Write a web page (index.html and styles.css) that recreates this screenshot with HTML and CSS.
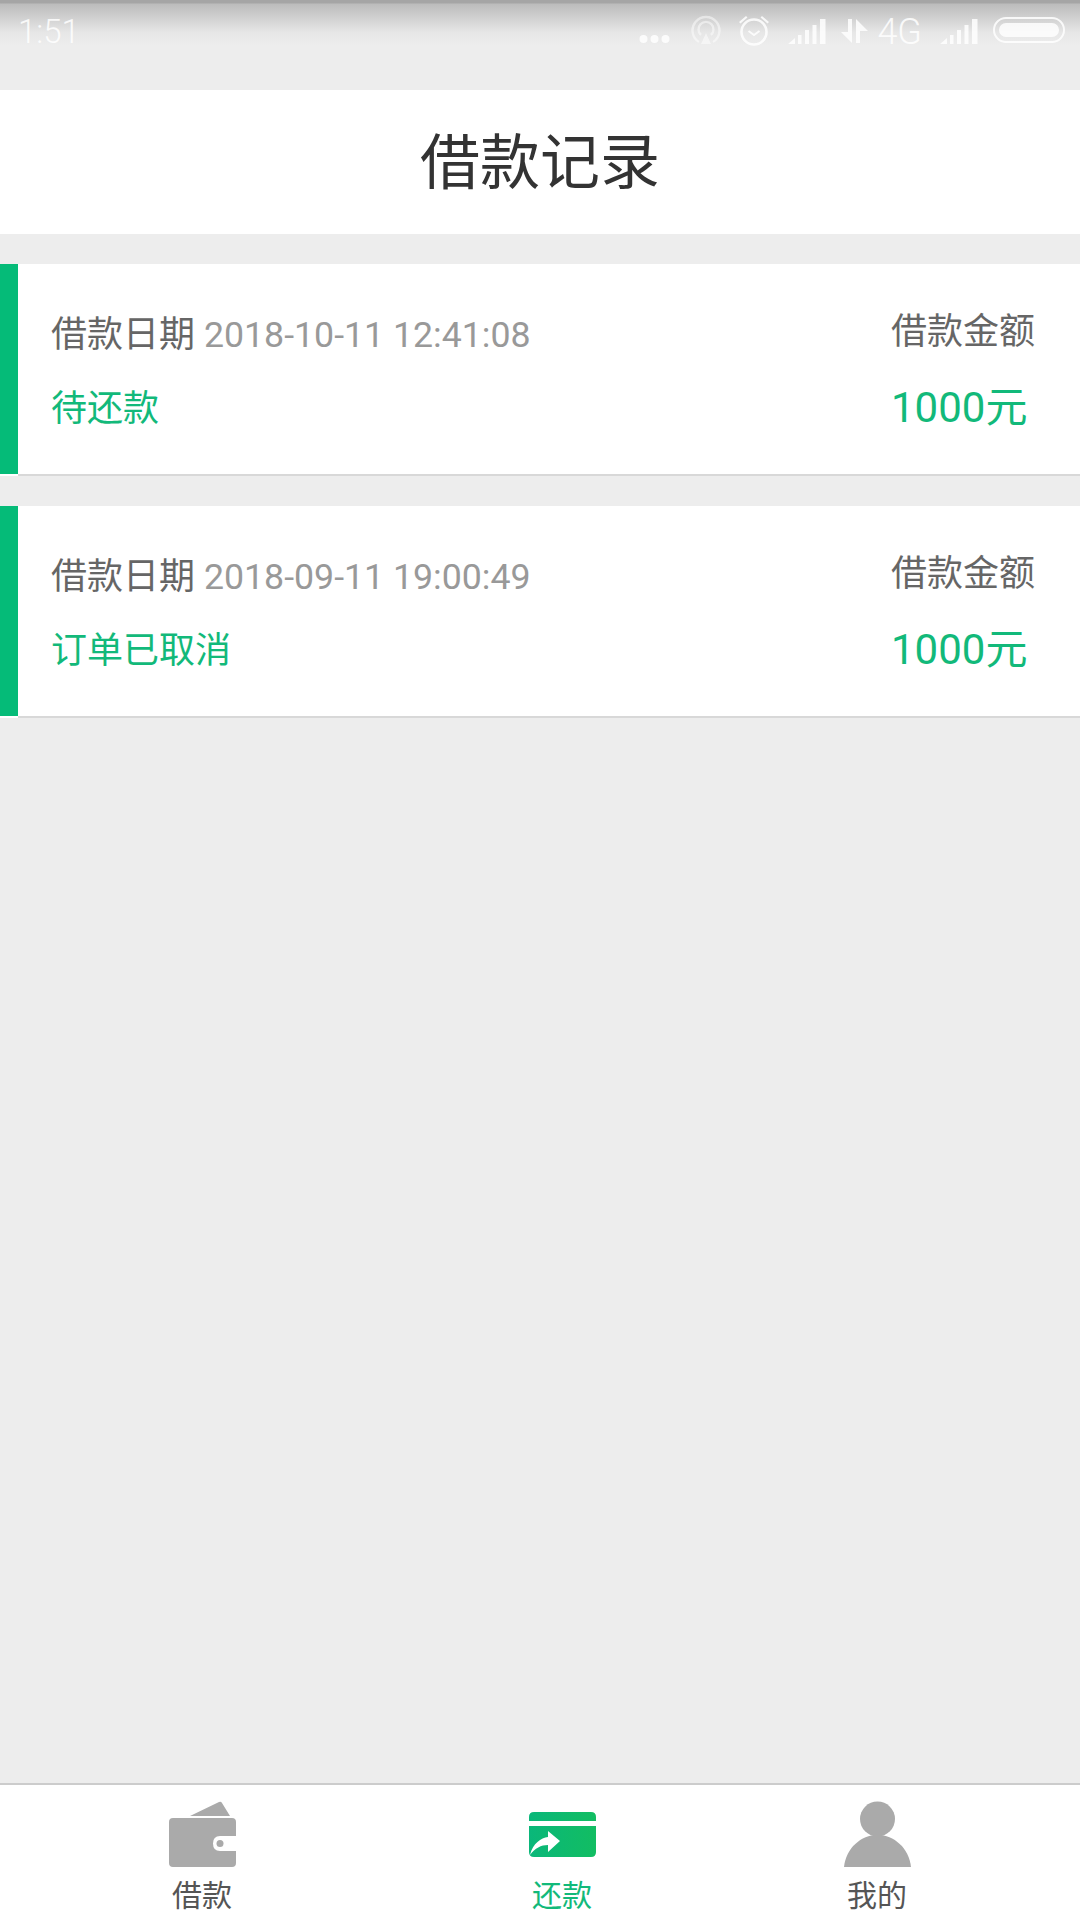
FILE: index.html
```html
<!DOCTYPE html>
<html lang="zh-CN">
<head>
    <meta charset="UTF-8">
    <meta name="viewport" content="width=device-width, initial-scale=1.0">
    <title>借款记录</title>
    <link rel="stylesheet" href="styles.css">
</head>
<body>
    <div class="page">
        <div class="status-bar">
            <span class="status-time">1:51</span>
            <div class="status-icons">
                <svg class="icon-dots" width="31" height="10" viewBox="0 0 31 10"><circle cx="4.5" cy="5" r="4"/><circle cx="15.5" cy="5" r="4"/><circle cx="26.5" cy="5" r="4"/></svg>
                <svg class="icon-hotspot" width="30" height="30" viewBox="0 0 30 30"><path d="M8 27 A13.5 13.5 0 1 1 22 27" fill="none" stroke="#fff" stroke-width="2.4"/><path d="M10 20 A7.5 7.5 0 1 1 20 20" fill="none" stroke="#fff" stroke-width="2.4"/><path d="M15 18 L20 29 H10 Z"/></svg>
                <svg class="icon-alarm" width="32" height="32" viewBox="0 0 32 32"><circle cx="16" cy="18" r="12.5" fill="none" stroke="#fff" stroke-width="2.6"/><path d="M10.500 17 L16 21 L21.500 17" fill="none" stroke="#fff" stroke-width="2"/><path d="M1 8 L8 2 L9.500 3.500 L2.500 9.500 Z M31 8 L24 2 L22.500 3.500 L29.500 9.500 Z"/></svg>
                <svg class="icon-signal" width="38" height="26" viewBox="0 0 38 26"><path d="M0 26 L7 20 V26 Z M10 17 H13.500 V26 H10 Z M17 12 H21 V26 H17 Z M24.500 7 H28.500 V26 H24.500 Z M32 1 H37.500 V26 H32 Z"/></svg>
                <svg class="icon-data" width="30" height="26" viewBox="0 0 30 26"><path d="M9 1 H13 V25 L2 14 H9 Z M17 1 L29 13 H21 V25 H17 Z"/></svg>
                <span class="status-net">4G</span>
                <svg class="icon-signal" width="38" height="26" viewBox="0 0 38 26"><path d="M0 26 L7 20 V26 Z M10 17 H13.500 V26 H10 Z M17 12 H21 V26 H17 Z M24.500 7 H28.500 V26 H24.500 Z M32 1 H37.500 V26 H32 Z"/></svg>
                <div class="battery"><div class="battery-level"></div></div>
            </div>
        </div>

        <div class="header">借款记录</div>

        <div class="records">
            <div class="record">
                <div class="record-bar"></div>
                <div class="record-body">
                    <div class="record-left">
                        <div class="record-date">借款日期 <span class="date-value">2018-10-11 12:41:08</span></div>
                        <div class="record-status">待还款</div>
                    </div>
                    <div class="record-right">
                        <div class="amount-label">借款金额</div>
                        <div class="amount-value">1000元</div>
                    </div>
                </div>
            </div>
            <div class="record">
                <div class="record-bar"></div>
                <div class="record-body">
                    <div class="record-left">
                        <div class="record-date">借款日期 <span class="date-value">2018-09-11 19:00:49</span></div>
                        <div class="record-status">订单已取消</div>
                    </div>
                    <div class="record-right">
                        <div class="amount-label">借款金额</div>
                        <div class="amount-value">1000元</div>
                    </div>
                </div>
            </div>
        </div>

        <div class="tabbar">
            <div class="tab">
                <svg class="tab-icon" width="67" height="66" viewBox="0 0 67 66">
                    <path d="M21 15 L50 1 Q52 0 53 2 L61 15 Z" fill="#aaa"/>
                    <path d="M4 17 H63 Q67 17 67 21 V35 H51 Q44 35 44 42.500 Q44 50 51 50 H67 V62 Q67 66 63 66 H4 Q0 66 0 62 V21 Q0 17 4 17 Z" fill="#aaa"/>
                    <circle cx="51" cy="42.500" r="3.500" fill="#aaa"/>
                </svg>
                <span class="tab-label">借款</span>
            </div>
            <div class="tab tab-active">
                <svg class="tab-icon" width="67" height="66" viewBox="0 0 67 66">
                    <defs><linearGradient id="cardFill" x1="0" y1="0" x2="1" y2="0"><stop offset="0" stop-color="#0ab77a"/><stop offset="1" stop-color="#12bd62"/></linearGradient></defs>
                    <path d="M5 11 H62 Q67 11 67 16 V20 H0 V16 Q0 11 5 11 Z" fill="url(#cardFill)"/>
                    <path d="M0 25 H67 V51 Q67 56 62 56 H5 Q0 56 0 51 Z" fill="url(#cardFill)"/>
                    <path d="M1 54 C4 42 12 37 19 36 V30 L31 40 L19 51 V44 C12 44 6 47 1 54 Z" fill="#fff"/>
                </svg>
                <span class="tab-label">还款</span>
            </div>
            <div class="tab">
                <svg class="tab-icon" width="67" height="66" viewBox="0 0 67 66">
                    <circle cx="33.500" cy="18" r="17.500" fill="#aaa"/>
                    <path d="M0 66 C2 47 17 34 33.500 34 C50 34 65 47 67 66 Z" fill="#aaa"/>
                </svg>
                <span class="tab-label">我的</span>
            </div>
        </div>
    </div>
</body>
</html>
```

FILE: styles.css
```css
* {
    box-sizing: border-box;
}

body {
    margin: 0;
    font-family: Roboto, "Noto Sans CJK SC", sans-serif;
    background-color: #ededed;
}

.page {
    display: flex;
    flex-direction: column;
    height: 1920px;
}

/* status bar */
.status-bar {
    height: 90px;
    display: flex;
    justify-content: space-between;
    padding: 14px 15px 0 18px;
    background: linear-gradient(#a5a5a5 0, #a5a5a5 3px, #bcbcbc 4px, #e6e6e6 32px, #ededed 46px);
    color: #fff;
}

.status-time {
    font-size: 33px;
    font-weight: 300;
    line-height: 36px;
    opacity: 0.85;
}

.status-icons {
    display: flex;
    align-items: flex-start;
    height: 32px;
    opacity: 0.85;
}

.status-icons svg {
    fill: #fff;
    flex: none;
}

.icon-dots {
    margin-top: 20px;
}

.icon-hotspot {
    margin-left: 21px;
    margin-top: 1px;
    opacity: 0.6;
}

.icon-alarm {
    margin-left: 17px;
}

.icon-signal {
    margin-left: 18px;
    margin-top: 4px;
}

.icon-data {
    margin-left: 13px;
    margin-top: 4px;
}

.status-net {
    margin-left: 8px;
    font-size: 36px;
    font-weight: 300;
    line-height: 36px;
}

.battery {
    width: 72px;
    height: 26px;
    margin-left: 15px;
    margin-top: 3px;
    padding: 4px;
    border: 2px solid #fff;
    border-radius: 13px;
}

.battery-level {
    height: 100%;
    background-color: #fff;
    border-radius: 8px;
}

/* title */
.header {
    height: 144px;
    padding-top: 4px;
    background-color: #fff;
    color: #333;
    font-size: 60px;
    line-height: 140px;
    text-align: center;
}

/* record list */
.records {
    flex: 1;
    display: flex;
    flex-direction: column;
    gap: 30px;
    padding-top: 30px;
}

.record {
    height: 212px;
    display: flex;
    background-color: #fff;
}

.record-bar {
    width: 18px;
    height: 210px;
    background-color: #05bb78;
}

.record-body {
    flex: 1;
    display: flex;
    justify-content: space-between;
    padding-right: 45px;
    border-bottom: 2px solid #d8d8d8;
}

.record-left {
    display: flex;
    flex-direction: column;
    gap: 26px;
    padding: 47px 0 0 33px;
}

.record-date {
    color: #666;
    font-size: 36px;
    line-height: 48px;
}

.date-value {
    color: #999;
    font-size: 35.7px;
}

.record-status {
    color: #12b97a;
    font-size: 36px;
    line-height: 48px;
}

.record-right {
    display: flex;
    flex-direction: column;
    gap: 25px;
    width: 144px;
    padding-top: 44px;
}

.amount-label {
    color: #666;
    font-size: 36px;
    line-height: 48px;
    white-space: nowrap;
}

.amount-value {
    color: #12b97a;
    font-size: 42px;
    line-height: 54px;
    white-space: nowrap;
}

/* bottom tabs */
.tabbar {
    height: 137px;
    display: grid;
    grid-template-columns: 404px 316px 314px;
    background-color: #fff;
    border-top: 2px solid #ccc;
}

.tab {
    display: flex;
    flex-direction: column;
    align-items: center;
    padding-top: 16px;
    color: #555;
}

.tab-active {
    color: #12b97a;
}

.tab-label {
    font-size: 30px;
    line-height: 38px;
    margin-top: 10px;
}
```
